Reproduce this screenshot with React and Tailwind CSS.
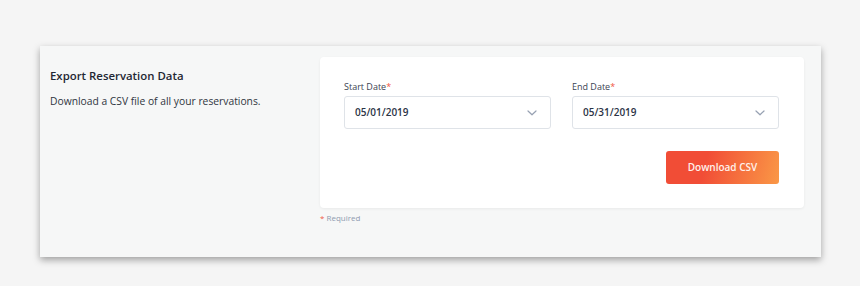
export default function App() {
  const Chevron = () => (
    <svg width="10" height="6" viewBox="0 0 10 6" fill="none">
      <path d="M1 1l4 3.8L9 1" stroke="#97a1b2" strokeWidth="1.2" strokeLinecap="round" strokeLinejoin="round" />
    </svg>
  );
  const Field = ({ label, value }) => (
    <div className="flex flex-col w-[207px]">
      <div className="text-[9px] leading-[14px] text-[#3b4352] mb-[2px]">
        {label}
        <span className="text-[#f0553f]">*</span>
      </div>
      <div className="h-[33px] rounded-[3px] border border-[#dfe3e8] bg-white flex items-center justify-between pl-[10px] pr-[13px]">
        <span className="text-[10px] font-semibold text-[#2b3446]">{value}</span>
        <Chevron />
      </div>
    </div>
  );
  return (
    <div
      className="w-[860px] h-[286px] bg-[#f5f5f5] pt-[46px] pl-[40px]"
      style={{ fontFamily: '"Open Sans", "Noto Sans", sans-serif' }}
    >
      <div className="w-[781px] h-[211px] bg-[#f6f7f7] shadow-[0_3px_7px_rgba(0,0,0,0.35)] flex">
        <div className="w-[280px] pl-[10px] pt-[22px]">
          <div className="text-[11.4px] font-semibold text-[#1f2733] leading-[16px]">Export Reservation Data</div>
          <div className="text-[10.3px] text-[#2f3540] leading-[16px] mt-[9px]">Download a CSV file of all your reservations.</div>
        </div>
        <div className="pt-[11px]">
          <div className="w-[484px] h-[151px] bg-white rounded-[4px] shadow-[0_1px_3px_rgba(0,0,0,0.06)] pl-[24px] pr-[25px] pt-[23px]">
            <div className="flex gap-[21px]">
              <Field label="Start Date" value="05/01/2019" />
              <Field label="End Date" value="05/31/2019" />
            </div>
            <div className="flex justify-end mt-[22px]">
              <button className="w-[113px] h-[33px] rounded-[3px] bg-[linear-gradient(105deg,#f14d36_35%,#fa9846)] text-[#fff1ec] text-[10px] font-semibold">
                Download CSV
              </button>
            </div>
          </div>
          <div className="text-[8px] mt-[4px] text-[#8f9bb0] leading-[12px]">
            <span className="text-[#f05a44]">*</span> Required
          </div>
        </div>
      </div>
    </div>
  );
}
